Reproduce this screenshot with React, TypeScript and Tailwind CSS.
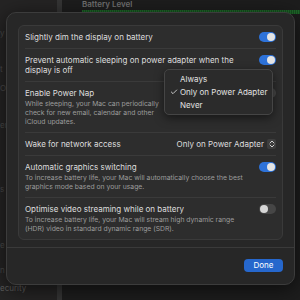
import { Check } from "lucide-react";

const sideBits: [string, number][] = [
  ["y", 33],
  ["t", 69],
  ["O", 88],
  ["er", 125],
  ["s", 189],
  ["e", 245],
  ["n", 270],
  ["ecurity", 288],
];

function Toggle({ on }: { on: boolean }) {
  return (
    <div
      className={
        on
          ? "w-[17px] h-[10px] rounded-full bg-[#2d72d9] flex items-center justify-end px-[1px] shrink-0"
          : "w-[17px] h-[10px] rounded-full bg-[#464646] flex items-center justify-start px-[1px] shrink-0"
      }
    >
      <div className={on ? "w-[8px] h-[8px] rounded-full bg-[#e4e4e4]" : "w-[8px] h-[8px] rounded-full bg-[#d6d6d6]"} />
    </div>
  );
}

function Row({
  title,
  sub,
  right,
  last,
}: {
  title: React.ReactNode;
  sub?: React.ReactNode;
  right: React.ReactNode;
  last?: boolean;
}) {
  return (
    <div className={last ? "mx-[6px] py-[6px] flex items-start justify-between gap-2" : "mx-[6px] py-[6px] flex items-start justify-between gap-2 border-b border-[#3a3a3a]"}>
      <div className="flex flex-col">
        <div className="text-[8px] leading-[10px] text-[#dedede]">{title}</div>
        {sub && <div className="mt-[1px] text-[6.8px] leading-[9px] text-[#9c9c9c]">{sub}</div>}
      </div>
      <div className="flex items-center h-[10px]">{right}</div>
    </div>
  );
}

export default function App() {
  return (
    <div className="relative w-[300px] h-[300px] overflow-hidden bg-[#1d1d1d]" style={{ fontFamily: "Inter, 'Noto Sans', sans-serif" }}>
      {/* background window */}
      <div className="flex h-full">
        <div className="w-[57px] h-full bg-[#252424] flex flex-col text-[8px] leading-[10px] text-[#4a4a4a]">
          {sideBits.map(([t, y], i) => {
            const prev = i === 0 ? 0 : sideBits[i - 1][1] + 5;
            return (
              <span key={i} className={t === "ecurity" ? "text-[#5e5e5e]" : ""} style={{ marginTop: y - 5 - prev }}>
                {t}
              </span>
            );
          })}
        </div>
        <div className="w-[5px] h-full bg-[#353535]" />
        <div className="flex-1 flex flex-col pl-[20px]">
          <div className="text-[8px] font-semibold text-[#707070] leading-[9px]">Battery Level</div>
          <div className="mt-[1px] h-[4px] bg-[repeating-linear-gradient(90deg,#1f6a2a_0px,#1f6a2a_1px,#174f20_1px,#174f20_2px)]" />
        </div>
      </div>

      {/* dialog */}
      <div className="absolute left-[6px] top-[12px] w-[289px] h-[273px] rounded-[10px] bg-[#272727] border border-[#3c3c3c] shadow-[0_4px_20px_rgba(0,0,0,0.6)] flex flex-col">
        <div className="px-[11px] pt-[12px]">
          <div className="rounded-[6px] bg-[#2d2d2d] border border-[#3a3a3a]">
            <Row title="Slightly dim the display on battery" right={<Toggle on />} />
            <Row
              title={<>Prevent automatic sleeping on power adapter when the<br />display is off</>}
              right={<Toggle on />}
            />
            <Row
              title="Enable Power Nap"
              sub={<>While sleeping, your Mac can periodically<br />check for new email, calendar and other<br />iCloud updates.</>}
              right={<Toggle on={false} />}
            />
            <Row
              title="Wake for network access"
              right={
                <div className="flex items-center gap-[3px] text-[8px] text-[#dedede]">
                  <span>Only on Power Adapter</span>
                  <div className="w-[9px] h-[10px] rounded-[2px] bg-[#3d3d3d] flex items-center justify-center">
                    <svg width="6" height="8" viewBox="0 0 6 8" fill="none" stroke="#cfcfcf" strokeWidth="1" strokeLinecap="round" strokeLinejoin="round">
                      <path d="M1 3l2-2 2 2M1 5l2 2 2-2" />
                    </svg>
                  </div>
                </div>
              }
            />
            <Row
              title="Automatic graphics switching"
              sub={<>To increase battery life, your Mac will automatically choose the best<br />graphics mode based on your usage.</>}
              right={<Toggle on />}
            />
            <Row
              last
              title="Optimise video streaming while on battery"
              sub={<>To increase battery life, your Mac will stream high dynamic range<br />(HDR) video in standard dynamic range (SDR).</>}
              right={<Toggle on={false} />}
            />
          </div>
        </div>
        <div className="mt-auto border-t border-[#3a3a3a] h-[37px] flex items-center justify-end pr-[11px]">
          <button className="w-[39px] h-[13px] rounded-[4px] bg-[#2667cc] text-white text-[8px] leading-[13px] mb-[1px]">Done</button>
        </div>
      </div>

      {/* popup menu */}
      <div className="absolute left-[164px] top-[69px] w-[109px] h-[46px] rounded-[5px] bg-[#2b2b2b] border border-[#454545] shadow-[0_3px_10px_rgba(0,0,0,0.5)] flex flex-col justify-center text-[8px] text-[#e2e2e2]">
        <div className="h-[13px] flex items-center pl-[15px]">Always</div>
        <div className="h-[13px] flex items-center pl-[5px]">
          <Check className="w-[8px] h-[8px] mr-[2px]" strokeWidth={2.5} />
          <span>Only on Power Adapter</span>
        </div>
        <div className="h-[13px] flex items-center pl-[15px]">Never</div>
      </div>
    </div>
  );
}
